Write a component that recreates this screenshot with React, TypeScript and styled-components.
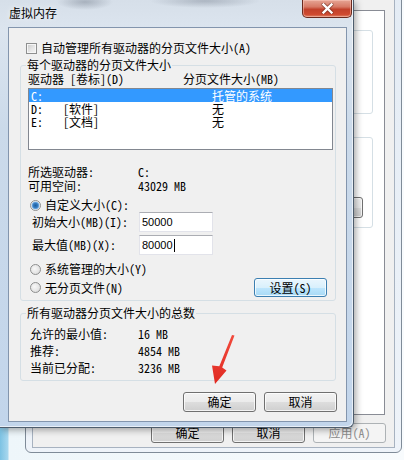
import React from "react";
import styled, { createGlobalStyle, css } from "styled-components";

const CJK = `"Noto Sans Mono CJK SC", "Noto Sans CJK SC", "Noto Sans CJK JP", monospace`;
const UI = `"Liberation Sans", Arial, sans-serif`;

const GlobalStyle = createGlobalStyle`
  html, body { margin: 0; padding: 0; }
  body {
    width: 404px; height: 460px; overflow: hidden;
    background: #eef5f9;
    font-family: ${CJK};
    font-size: 12px;
    color: #000;
  }
  *, *::before, *::after { box-sizing: border-box; }
`;

const Desktop = styled.div`
  position: relative;
  width: 404px;
  height: 460px;
  overflow: hidden;
  background: linear-gradient(90deg, #7cc2e3 0, #a8d7ee 8px, #eef6fa 9px, #f8fbfd 100%);
`;

/* ---------- parent window (behind) ---------- */
const ParentWindow = styled.div`
  position: absolute;
  left: 25px;
  top: -40px;
  width: 377px;
  height: 493px;
  border: 1px solid #7f8b98;
  border-radius: 0 0 6px 6px;
  background: linear-gradient(180deg, #e3ebf4, #eef3f9);
  padding: 0 6px 4px 6px;
  display: flex;
`;

const ParentClient = styled.div`
  flex: 1;
  display: flex;
  flex-direction: column;
  background: #f0f0f0;
  border: 1px solid #a7b2c0;
  padding: 48px 0 4px 0;
`;

const TabPage = styled.div`
  flex: 1;
  margin-right: 9px;
  background: #fff;
  border: 1px solid #898c95;
  padding: 19px 11px 0 0;
  display: flex;
  flex-direction: column;
`;

const ParentGroup = styled.div<{ $h: number; $mt?: number }>`
  height: ${(p) => p.$h}px;
  margin-top: ${(p) => p.$mt ?? 0}px;
  border: 1px solid #d5dfe5;
  border-radius: 3px;
  display: flex;
  justify-content: flex-end;
  align-items: flex-start;
  padding: 59px 9px 0 0;
`;

/* ---------- buttons ---------- */
type BtnVariant = "normal" | "hot" | "disabled";

const WinButton = styled.div<{ $w: number; $h?: number; $variant?: BtnVariant }>`
  width: ${(p) => p.$w}px;
  height: ${(p) => p.$h ?? 20}px;
  flex: none;
  display: flex;
  align-items: center;
  justify-content: center;
  font-family: ${CJK};
  font-size: 12px;
  line-height: 14px;
  border-radius: 3px;
  white-space: nowrap;
  overflow: hidden;
  border: 1px solid #707070;
  color: #000;
  background: linear-gradient(180deg, #f2f2f2 0%, #ebebeb 50%, #dddddd 51%, #cfcfcf 100%);
  box-shadow: inset 0 0 0 1px rgba(255, 255, 255, 0.75);
  ${(p) =>
    p.$variant === "hot" &&
    css`
      border-color: #3c7fb1;
      background: linear-gradient(180deg, #eaf6fd 0%, #d9f0fc 50%, #bee6fd 51%, #a7d9f5 100%);
    `}
  ${(p) =>
    p.$variant === "disabled" &&
    css`
      border-color: #adb2b5;
      color: #8d8d8d;
      background: #f4f4f4;
      box-shadow: none;
    `}
`;

const ButtonRow = styled.div<{ $mt: number; $pr: number }>`
  display: flex;
  justify-content: flex-end;
  gap: 8px;
  margin-top: ${(p) => p.$mt}px;
  padding-right: ${(p) => p.$pr}px;
`;

/* ---------- dialog ---------- */
const Dialog = styled.div`
  position: absolute;
  left: 0;
  top: 0;
  width: 354px;
  height: 428px;
  border-right: 1px solid #4e5d6d;
  border-bottom: 1px solid #4e5d6d;
  border-bottom-right-radius: 6px;
  background:
    radial-gradient(ellipse 28px 8px at 85px 2px, rgba(110, 120, 135, 0.45), transparent),
    radial-gradient(ellipse 55px 7px at 205px 1px, rgba(110, 120, 135, 0.4), transparent),
    linear-gradient(180deg, #d6dfe9 0%, #dce5ef 7%, #cbdaea 30%, #c2d5eb 100%);
  box-shadow: 2px 2px 7px rgba(0, 0, 0, 0.35), inset -1px -1px 0 rgba(255, 255, 255, 0.6);
  display: flex;
  flex-direction: column;
  padding: 0 6px 5px 8px;
`;

const TitleBar = styled.div`
  height: 27px;
  flex: none;
  display: flex;
  align-items: flex-start;
  margin-right: -6px;
`;

const Title = styled.div`
  padding: 6px 0 0 1px;
  line-height: 14px;
  font-size: 12px;
  color: #000;
  text-shadow: 0 0 6px rgba(255, 255, 255, 0.9);
`;

const CloseButton = styled.div`
  margin-left: auto;
  margin-right: 1px;
  width: 50px;
  height: 18px;
  border: 1px solid #6a2a1e;
  border-top: none;
  border-radius: 0 0 5px 5px;
  background: linear-gradient(180deg, #e6a595 0%, #d77a66 40%, #c2412b 55%, #cf4a30 85%, #e0876b 100%);
  box-shadow: inset 0 0 0 1px rgba(255, 210, 200, 0.45);
  display: flex;
  align-items: center;
  justify-content: center;
`;

const Client = styled.div`
  flex: 1;
  display: flex;
  flex-direction: column;
  background: #f0f0f0;
  border: 1px solid #8395ad;
  padding: 13px 9px 0 0;
`;

const CheckRow = styled.div`
  display: flex;
  align-items: center;
  gap: 4px;
  height: 14px;
  line-height: 14px;
  padding-left: 17px;
`;

const CheckBox = styled.span`
  width: 11px;
  height: 11px;
  flex: none;
  border: 1px solid #8e8f8f;
  background: linear-gradient(135deg, #c9c9c9 0%, #e6e6e6 55%, #f6f6f6 100%);
  box-shadow: inset 0 0 0 1px #f6f6f6;
`;

const GroupBox = styled.fieldset<{ $mt: number; $pb: number }>`
  margin: ${(p) => p.$mt}px 1px 0 11px;
  padding: 0 2px ${(p) => p.$pb}px 7px;
  min-width: 0;
  border: 1px solid #d5dfe5;
  border-radius: 3px;
`;

const Legend = styled.legend`
  padding: 0 1px;
  margin-left: -2px;
  line-height: 14px;
  font-size: 12px;
`;

const ColumnHeader = styled.div`
  display: grid;
  grid-template-columns: 155px auto;
  line-height: 14px;
  white-space: pre;
`;

const ListBox = styled.div`
  margin-top: 2px;
  height: 62px;
  background: #fff;
  border: 1px solid #828790;
`;

const ListRow = styled.div<{ $selected?: boolean }>`
  display: grid;
  grid-template-columns: 32px 149px 1fr;
  height: 13px;
  line-height: 13px;
  padding-left: 2px;
  white-space: pre;
  background: ${(p) => (p.$selected ? "#3399ff" : "transparent")};
  color: ${(p) => (p.$selected ? "#fff" : "#000")};
`;

const InfoRow = styled.div<{ $mt?: number }>`
  display: grid;
  grid-template-columns: 110px auto;
  line-height: 14px;
  margin-top: ${(p) => p.$mt ?? 0}px;
  white-space: pre;
`;

const RadioRow = styled.div<{ $mt?: number }>`
  display: flex;
  align-items: center;
  gap: 4px;
  height: 14px;
  line-height: 14px;
  padding-left: 2px;
  margin-top: ${(p) => p.$mt ?? 0}px;
`;

const Radio = styled.span<{ $checked?: boolean }>`
  width: 11px;
  height: 11px;
  flex: none;
  border-radius: 50%;
  border: 1px solid #8e8f8f;
  background: ${(p) =>
    p.$checked
      ? "radial-gradient(circle at 50% 50%, #1c5e9e 0, #3a7fc4 2.5px, #86b9e8 3.6px, #f4f4f4 4.3px, #e6e6e6 100%)"
      : "radial-gradient(circle at 40% 40%, #f8f8f8 0, #e4e4e4 60%, #d2d2d2 100%)"};
`;

const FieldRow = styled.div<{ $mt?: number }>`
  display: grid;
  grid-template-columns: 107px 74px;
  align-items: center;
  height: 20px;
  padding-left: 4px;
  margin-top: ${(p) => p.$mt ?? 0}px;
  line-height: 14px;
`;

const TextBox = styled.div`
  height: 20px;
  display: flex;
  align-items: center;
  padding-left: 2px;
  background: #fff;
  border: 1px solid #e2e3ea;
  border-top-color: #abadb3;
  font-family: ${UI};
  font-size: 11px;
  color: #000;
`;

const Caret = styled.span`
  display: inline-block;
  width: 1px;
  height: 13px;
  margin-left: 1px;
  background: #000;
`;

const LastRow = styled.div`
  display: flex;
  align-items: center;
  justify-content: space-between;
  height: 19px;
  margin-top: 2px;
  padding-right: 6px;
`;

const TotalsList = styled.div`
  padding: 5px 0 0 2px;
`;

const TotalsRow = styled.div`
  display: grid;
  grid-template-columns: 108px auto;
  line-height: 17px;
  white-space: pre;
`;

const ArrowSvg = styled.svg`
  position: absolute;
  left: 205px;
  top: 330px;
  width: 35px;
  height: 60px;
  overflow: visible;
`;

export default function App() {
  return (
    <>
      <GlobalStyle />
      <Desktop>
        <ParentWindow>
          <ParentClient>
            <TabPage>
              <ParentGroup $h={84} />
              <ParentGroup $h={91} $mt={23}>
                <WinButton $w={72} $h={21}>更改(C)</WinButton>
              </ParentGroup>
            </TabPage>
            <ButtonRow $mt={8} $pr={8}>
              <WinButton $w={73}>确定</WinButton>
              <WinButton $w={73}>取消</WinButton>
              <WinButton $w={73} $variant="disabled">应用(A)</WinButton>
            </ButtonRow>
          </ParentClient>
        </ParentWindow>

        <Dialog>
          <TitleBar>
            <Title>虚拟内存</Title>
            <CloseButton>
              <svg width="13" height="11" viewBox="0 0 13 11">
                <path d="M2.5 1.5 L10.5 9.5 M10.5 1.5 L2.5 9.5" stroke="#5e2418" strokeWidth="4" strokeLinecap="round" fill="none" opacity="0.55" />
                <path d="M2.5 1.5 L10.5 9.5 M10.5 1.5 L2.5 9.5" stroke="#ffffff" strokeWidth="2.4" strokeLinecap="square" fill="none" />
              </svg>
            </CloseButton>
          </TitleBar>
          <Client>
            <CheckRow>
              <CheckBox />
              <span>自动管理所有驱动器的分页文件大小(A)</span>
            </CheckRow>

            <GroupBox $mt={3} $pb={3}>
              <Legend>每个驱动器的分页文件大小</Legend>
              <ColumnHeader>
                <span>驱动器 [卷标](D)</span>
                <span>分页文件大小(MB)</span>
              </ColumnHeader>
              <ListBox>
                <ListRow $selected>
                  <span>C:</span>
                  <span></span>
                  <span>托管的系统</span>
                </ListRow>
                <ListRow>
                  <span>D:</span>
                  <span>[软件]</span>
                  <span>无</span>
                </ListRow>
                <ListRow>
                  <span>E:</span>
                  <span>[文档]</span>
                  <span>无</span>
                </ListRow>
              </ListBox>
              <InfoRow $mt={15}>
                <span>所选驱动器:</span>
                <span>C:</span>
              </InfoRow>
              <InfoRow>
                <span>可用空间:</span>
                <span>43029 MB</span>
              </InfoRow>
              <RadioRow $mt={5}>
                <Radio $checked />
                <span>自定义大小(C):</span>
              </RadioRow>
              <FieldRow>
                <span>初始大小(MB)(I):</span>
                <TextBox>50000</TextBox>
              </FieldRow>
              <FieldRow $mt={3}>
                <span>最大值(MB)(X):</span>
                <TextBox>
                  80000
                  <Caret />
                </TextBox>
              </FieldRow>
              <RadioRow $mt={7}>
                <Radio />
                <span>系统管理的大小(Y)</span>
              </RadioRow>
              <LastRow>
                <RadioRow>
                  <Radio />
                  <span>无分页文件(N)</span>
                </RadioRow>
                <WinButton $w={73} $h={19} $variant="hot">设置(S)</WinButton>
              </LastRow>
            </GroupBox>

            <GroupBox $mt={5} $pb={4}>
              <Legend>所有驱动器分页文件大小的总数</Legend>
              <TotalsList>
                <TotalsRow>
                  <span>允许的最小值:</span>
                  <span>16 MB</span>
                </TotalsRow>
                <TotalsRow>
                  <span>推荐:</span>
                  <span>4854 MB</span>
                </TotalsRow>
                <TotalsRow>
                  <span>当前已分配:</span>
                  <span>3236 MB</span>
                </TotalsRow>
              </TotalsList>
            </GroupBox>

            <ButtonRow $mt={11} $pr={0}>
              <WinButton $w={73}>确定</WinButton>
              <WinButton $w={73}>取消</WinButton>
            </ButtonRow>
          </Client>
        </Dialog>

        <ArrowSvg viewBox="0 0 35 60">
          <defs>
            <linearGradient id="arrowRed" x1="0" y1="0" x2="0" y2="1">
              <stop offset="0" stopColor="#f24a3c" />
              <stop offset="1" stopColor="#e02a22" />
            </linearGradient>
          </defs>
          <polygon
            points="27,5 29.5,5.6 17.2,37.5 21.5,40.5 10,54 7,35.5 14.3,36.3"
            fill="url(#arrowRed)"
          />
        </ArrowSvg>
      </Desktop>
    </>
  );
}
